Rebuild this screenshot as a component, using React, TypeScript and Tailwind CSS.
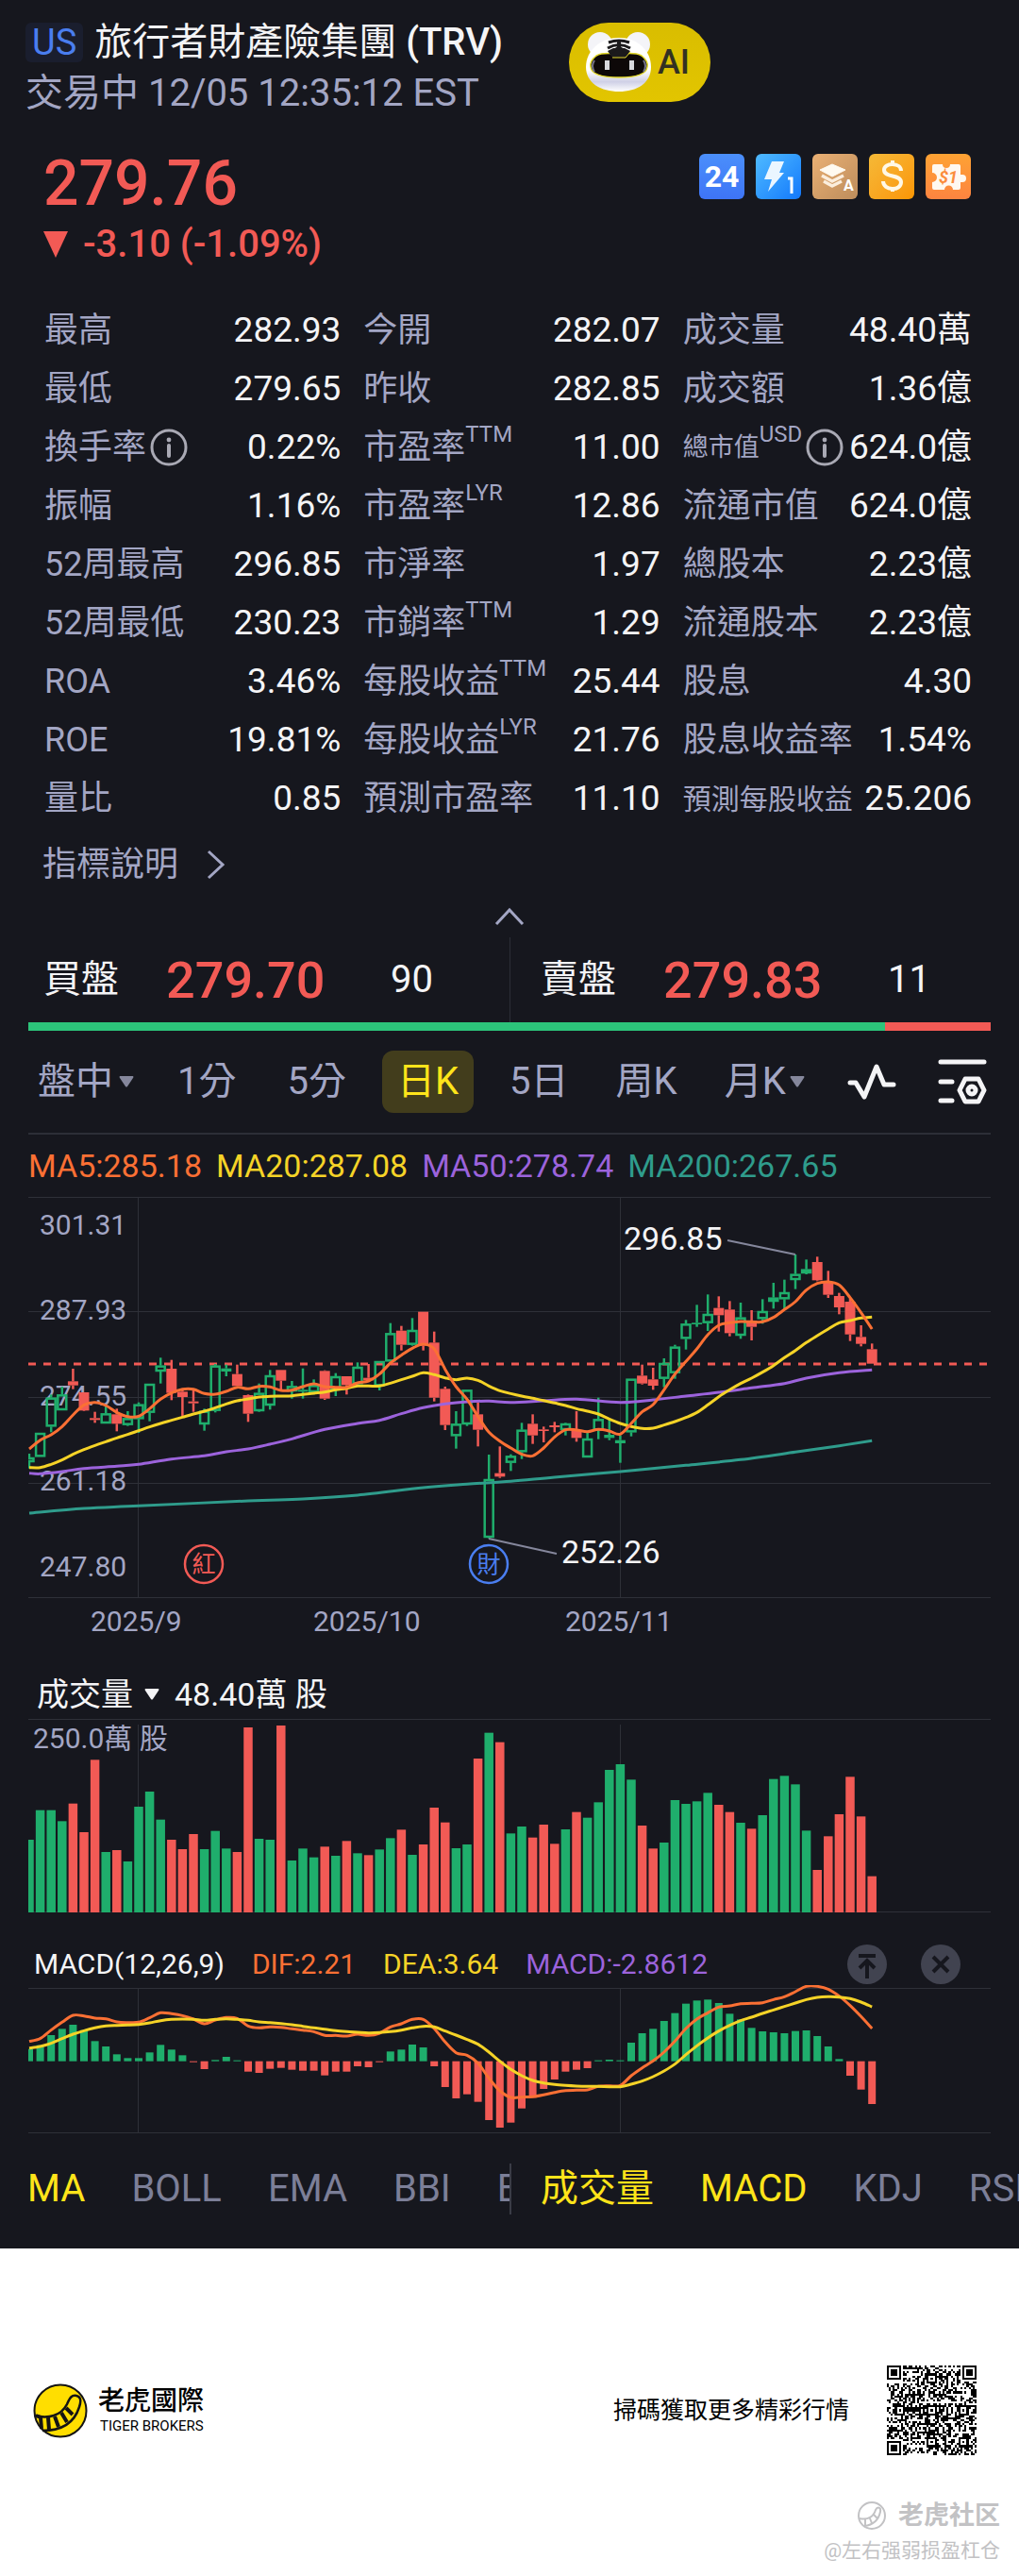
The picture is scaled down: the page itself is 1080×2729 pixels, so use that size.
import React from "react";

type Candle = [number, number, number, number, 0 | 1];

const GREEN = "#1fae6c";
const RED = "#f25a55";
const ORANGE = "#fb7034";
const YELLOW = "#f5d327";
const PURPLE = "#9c63dc";
const TEAL = "#2f9c8c";
const MUTED = "#a3a6c4";
const GRID = "#2e3038";

/* [high, body top, body bottom, low, rising] in thirds of a chart unit */
const candles: Candle[] = [
  [843, 855, 870, 890, 1], [777, 777, 853, 853, 1], [655, 665, 757, 775, 1], [630, 655, 705, 705, 1],
  [573, 613, 626, 638, 0], [648, 648, 706, 708, 0], [710, 730, 736, 745, 0], [690, 715, 747, 747, 1],
  [700, 718, 748, 772, 0], [708, 730, 752, 755, 1], [680, 686, 733, 777, 1], [621, 621, 713, 740, 1],
  [538, 563, 582, 620, 1], [545, 573, 650, 673, 0], [640, 646, 663, 725, 0], [642, 677, 683, 710, 0],
  [700, 707, 750, 770, 1], [558, 563, 707, 712, 1], [560, 572, 582, 597, 1], [560, 590, 628, 628, 0],
  [655, 657, 716, 742, 0], [620, 650, 708, 710, 1], [577, 594, 690, 703, 1], [577, 577, 611, 640, 0],
  [612, 628, 645, 668, 1], [572, 640, 646, 668, 1], [607, 625, 648, 655, 1], [578, 580, 668, 672, 0],
  [587, 597, 640, 660, 1], [597, 597, 625, 655, 0], [553, 567, 622, 625, 1], [558, 602, 610, 612, 0],
  [549, 549, 628, 642, 1], [428, 460, 550, 550, 1], [437, 452, 497, 515, 0], [412, 450, 497, 500, 1],
  [392, 392, 500, 515, 0], [455, 490, 665, 677, 0], [630, 637, 752, 768, 0], [708, 748, 787, 827, 1],
  [640, 640, 750, 755, 1], [680, 718, 767, 820, 0], [846, 924, 1110, 1112, 1], [820, 905, 916, 920, 0],
  [845, 850, 872, 898, 1], [745, 767, 838, 860, 1], [718, 748, 785, 812, 0], [757, 766, 771, 807, 0],
  [742, 753, 759, 775, 0], [745, 747, 768, 785, 1], [708, 768, 793, 805, 0], [770, 795, 855, 855, 1],
  [665, 733, 770, 797, 1], [735, 783, 793, 800, 1], [785, 800, 810, 872, 1], [605, 605, 775, 788, 1],
  [560, 595, 620, 623, 0], [570, 607, 627, 640, 0], [540, 555, 605, 632, 1], [497, 503, 587, 605, 1],
  [418, 430, 478, 512, 1], [370, 427, 432, 440, 1], [337, 399, 428, 453, 1], [343, 380, 403, 455, 0],
  [358, 385, 460, 470, 0], [363, 410, 468, 478, 1], [387, 420, 440, 483, 0], [352, 390, 415, 430, 1],
  [300, 347, 360, 382, 1], [290, 330, 352, 385, 1], [210, 272, 291, 320, 1], [226, 257, 270, 273, 1],
  [217, 234, 292, 295, 0], [262, 300, 338, 348, 0], [332, 342, 378, 400, 0], [348, 360, 464, 485, 0],
  [435, 472, 494, 502, 0], [493, 511, 557, 557, 0],
];

const ma5 = [828, 800, 783, 757, 720, 688, 680, 690, 712, 725, 724, 700, 670, 650, 638, 638, 652, 654, 645, 632, 637, 629, 631, 642, 641, 630, 621, 630, 632, 632, 618, 612, 590, 555, 530, 508, 495, 510, 575, 630, 670, 725, 775, 803, 825, 845, 850, 825, 790, 767, 768, 773, 766, 771, 781, 747, 710, 687, 640, 590, 550, 510, 465, 435, 427, 423, 424, 424, 410, 385, 360, 323, 302, 297, 307, 347, 395, 447];
const ma20 = [887, 887, 877, 863, 845, 830, 817, 805, 793, 782, 770, 758, 747, 737, 727, 717, 708, 697, 685, 675, 669, 663, 661, 660, 659, 655, 651, 647, 640, 635, 628, 628, 628, 619, 608, 597, 586, 592, 602, 608, 603, 610, 628, 643, 652, 660, 667, 674, 682, 690, 700, 708, 717, 733, 747, 757, 763, 762, 752, 741, 728, 712, 688, 662, 640, 620, 603, 584, 563, 538, 515, 490, 468, 447, 427, 420, 412, 409];
const ma50: [number, number][] = [[0, 905], [1, 907], [3, 900], [5, 890], [8, 883], [10, 877], [13, 860], [16, 850], [18, 837], [20, 828], [22, 813], [24, 796], [27, 766], [30, 747], [32, 737], [34, 716], [36, 697], [38, 685], [40, 678], [42, 676], [44, 680], [47, 675], [50, 670], [54, 680], [57, 672], [60, 660], [63, 648], [66, 634], [69, 620], [71, 603], [74, 586], [77, 577]];
const ma200: [number, number][] = [[0, 1032], [5, 1017], [10, 1009], [20, 993], [25, 987], [30, 975], [36, 951], [40, 940], [44, 931], [48, 918], [54, 900], [60, 880], [65, 862], [70, 838], [74, 818], [77, 802]];

/* Top edge of each volume bar; negative marks a falling day */
const volumes = [600, 506, 506, 541, -485, -576, -346, 639, -633, 669, 495, 447, 536, -600, -630, -582, 630, 572, 628, -639, -243, 597, 600, -237, 666, 628, 656, -622, 651, -604, 643, -649, 631, 595, -568, 648, -615, -498, -545, 627, 615, -342, 260, -290, 580, 558, -593, -552, -613, 567, -512, 530, 481, 378, 360, 409, -555, -628, 609, 474, 486, 478, 451, -489, -512, 546, -565, 522, 407, 397, 424, 571, -696, -589, -519, -400, -526, -716];

const macd = [395, 383, 351, 331, 318, 335, 370, 387, 412, 424, 424, 406, 382, 397, 415, 437, 459, 430, 420, 431, 467, 471, 458, 455, 461, 464, 464, 479, 467, 467, 450, 453, 437, 403, 397, 381, 390, 450, 516, 552, 539, 563, 621, 645, 629, 584, 550, 522, 492, 467, 461, 456, 431, 429, 431, 375, 345, 331, 306, 281, 251, 241, 238, 249, 283, 301, 328, 339, 342, 345, 338, 336, 354, 387, 427, 480, 524, 570];
const dif = [371, 362, 335, 310, 288, 290, 297, 299, 309, 311, 310, 296, 280, 283, 289, 300, 315, 303, 295, 298, 322, 328, 325, 326, 331, 335, 340, 352, 352, 354, 348, 352, 345, 325, 315, 301, 301, 330, 373, 407, 415, 440, 488, 528, 549, 548, 547, 541, 533, 527, 526, 525, 514, 512, 511, 480, 455, 433, 405, 370, 330, 300, 280, 262, 258, 251, 250, 248, 238, 229, 213, 196, 196, 205, 227, 257, 292, 330];
const dea = [392, 387, 377, 362, 348, 337, 328, 322, 320, 319, 317, 312, 305, 301, 300, 301, 304, 301, 299, 301, 304, 309, 311, 314, 318, 323, 328, 332, 337, 340, 342, 344, 343, 340, 335, 328, 323, 325, 338, 351, 365, 380, 405, 434, 460, 480, 495, 503, 508, 511, 513, 514, 514, 515, 515, 507, 497, 483, 465, 443, 413, 385, 360, 338, 320, 305, 294, 282, 271, 260, 249, 238, 231, 229, 230, 235, 246, 261];

const barX = (i: number) => 1 + 11.6 * i;
const indexed = (values: number[]) => values.map((v, i) => [i, v] as [number, number]);

/* Smooth curve through the points, with Catmull-Rom control points */
function curve(points: [number, number][], offset: number) {
  const p = points.map(([i, v]) => [barX(i), v / 3 - offset]);
  let d = `M${p[0][0]} ${p[0][1]}`;
  for (let i = 0; i < p.length - 1; i++) {
    const a = p[i - 1] || p[i];
    const b = p[i];
    const c = p[i + 1];
    const e = p[i + 2] || c;
    d += `C${b[0] + (c[0] - a[0]) / 6} ${b[1] + (c[1] - a[1]) / 6} ${c[0] - (e[0] - b[0]) / 6} ${c[1] - (e[1] - b[1]) / 6} ${c[0]} ${c[1]}`;
  }
  return d;
}

function PriceChart() {
  const y = (v: number) => v / 3 - 8;
  return (
    <svg viewBox="0 0 1020 476" className="block w-full" role="img" aria-label="日K">
      <g stroke={GRID} strokeWidth="1">
        {[1.5, 122.5, 213.5, 304.5, 425.5].map((v) => (
          <line key={v} x1="0" x2="1020" y1={v} y2={v} />
        ))}
        <line x1="116.5" x2="116.5" y1="1" y2="425" />
        <line x1="627.5" x2="627.5" y1="1" y2="425" />
      </g>
      <g fill={MUTED} fontSize="30">
        <text x="12" y="41">301.31</text>
        <text x="12" y="131">287.93</text>
        <text x="12" y="222">274.55</text>
        <text x="12" y="312">261.18</text>
        <text x="12" y="403">247.80</text>
        <text x="66" y="461">2025/9</text>
        <text x="302" y="461">2025/10</text>
        <text x="569" y="461">2025/11</text>
      </g>
      <line x1="0" x2="1017" y1="178" y2="178" stroke={RED} strokeWidth="3" strokeDasharray="8 8" />
      {candles.map(([h, t, b, l, up], i) => {
        const x = barX(i);
        const color = up ? GREEN : RED;
        return (
          <g key={i} stroke={color} strokeWidth="2.5">
            <line x1={x} x2={x} y1={y(h)} y2={y(t)} />
            <line x1={x} x2={x} y1={y(b)} y2={y(l)} />
            {up && b - t > 12 ? (
              <rect x={x - 4.5} y={y(t) + 1} width="9" height={(b - t) / 3 - 2} fill="none" />
            ) : (
              <rect x={x - 5.5} y={y(t)} width="11" height={(b - t) / 3} fill={color} stroke="none" />
            )}
          </g>
        );
      })}
      <g fill="none" strokeWidth="3">
        <path d={curve(ma200, 8)} stroke={TEAL} />
        <path d={curve(ma50, 8)} stroke={PURPLE} />
        <path d={curve(indexed(ma20), 8)} stroke={YELLOW} />
        <path d={curve(indexed(ma5), 8)} stroke={ORANGE} />
      </g>
      <g stroke="#85879c" strokeWidth="2">
        <line x1="741" y1="47" x2="813" y2="62" />
        <line x1="488" y1="363" x2="560" y2="379" />
      </g>
      <g fill="#f4f4f6" fontSize="34">
        <text x="631" y="57">296.85</text>
        <text x="565" y="389">252.26</text>
      </g>
      <g fontSize="25" textAnchor="middle" strokeWidth="2.5">
        <circle cx="186" cy="390" r="20" fill="none" stroke={RED} />
        <text x="186" y="399" fill={RED}>紅</text>
        <circle cx="488" cy="390" r="20" fill="none" stroke="#4a7ef0" />
        <text x="488" y="399" fill="#4a7ef0">財</text>
      </g>
    </svg>
  );
}

function VolumeChart() {
  return (
    <svg viewBox="0 0 1020 210" className="block w-full" role="img" aria-label="成交量">
      <g stroke={GRID} strokeWidth="1">
        <line x1="0" x2="1020" y1="2.5" y2="2.5" />
        <line x1="0" x2="1020" y1="206.5" y2="206.5" />
        <line x1="116.5" x2="116.5" y1="8" y2="206" />
        <line x1="627.5" x2="627.5" y1="8" y2="206" />
      </g>
      <text x="5" y="33" fontSize="30" fill={MUTED}>250.0萬 股</text>
      {volumes.map((v, i) => {
        const top = Math.abs(v) / 3 - 70;
        return <rect key={i} x={barX(i) - 4.75} y={top} width="9.5" height={207 - top} fill={v < 0 ? RED : GREEN} />;
      })}
    </svg>
  );
}

function MacdChart() {
  const zero = 434 / 3 - 64;
  return (
    <svg viewBox="0 0 1020 158" className="block w-full overflow-hidden" role="img" aria-label="MACD">
      <g stroke={GRID} strokeWidth="1">
        <line x1="0" x2="1020" y1="3.5" y2="3.5" />
        <line x1="0" x2="1020" y1="156.5" y2="156.5" />
        <line x1="116.5" x2="116.5" y1="3" y2="156" />
        <line x1="627.5" x2="627.5" y1="3" y2="156" />
      </g>
      {macd.map((v, i) => {
        const edge = v / 3 - 64;
        return (
          <rect key={i} x={barX(i) - 4} y={Math.min(edge, zero)} width="8" height={Math.abs(edge - zero)} fill={edge > zero ? RED : GREEN} />
        );
      })}
      <g fill="none" strokeWidth="3">
        <path d={curve(indexed(dif), 64)} stroke={ORANGE} />
        <path d={curve(indexed(dea), 64)} stroke={YELLOW} />
      </g>
    </svg>
  );
}

function Robot() {
  return (
    <svg viewBox="0 0 72 66" className="h-[66px] w-[72px]" aria-hidden="true">
      <defs>
        <linearGradient id="robotHead" x1="0" y1="0" x2="0" y2="1">
          <stop offset="0.6" stopColor="#ffffff" />
          <stop offset="0.82" stopColor="#cfd0e6" />
          <stop offset="1" stopColor="#ffffff" />
        </linearGradient>
      </defs>
      <circle cx="17" cy="14" r="13" fill="#f4f4f8" />
      <circle cx="57" cy="14" r="13" fill="#f4f4f8" />
      <path d="M37 7C56 7 71 20 71 38C71 55 56 64 37 64C18 64 2 55 2 38C2 20 18 7 37 7Z" fill="url(#robotHead)" />
      <path d="M13 26C20 22 28 24 37 24S54 22 61 26C66 30 68 34 67 38C66 46 53 49 37 49S8 46 7 38C6 34 8 30 13 26Z" fill="#0d0808" stroke="#e3d92c" strokeWidth="1.5" />
      <path d="M25 21L30 28H44L49 21L43 18H31Z" fill="#1b1a1c" />
      <path d="M30 28H44L49 22" fill="none" stroke="#e3d92c" strokeWidth="1" />
      <path d="M26 12Q37 8 48 12M25 18Q37 11 49 18M28 23L37 17L46 23" fill="none" stroke="#1b1a1c" strokeWidth="3" />
      <path d="M37 10V24" stroke="#1b1a1c" strokeWidth="4" />
      <path d="M11 31Q7 37 11 43M63 31Q67 37 63 43" fill="none" stroke="#77768a" strokeWidth="2" />
      <rect x="22" y="31" width="5" height="10" fill="#d8d8dc" />
      <rect x="48" y="31" width="5" height="10" fill="#d8d8dc" />
    </svg>
  );
}

function FeatureTags() {
  return (
    <div className="flex gap-3 pt-[5px]">
      <span className="flex size-12 items-center justify-center rounded-md bg-gradient-to-b from-[#4b8ffb] to-[#3e74f6] text-[32px] font-bold text-white">24</span>
      <span className="flex size-12 rounded-md bg-gradient-to-br from-[#4fbaff] to-[#1478fb]">
        <svg viewBox="0 0 48 48" className="size-12" aria-hidden="true">
          <path d="M17 8H30L25 20H30L13 40L17 27H9Z" fill="#eaf6ff" />
          <path d="M34 26H38V42" fill="none" stroke="#fff" strokeWidth="3" />
        </svg>
      </span>
      <span className="flex size-12 rounded-md bg-gradient-to-br from-[#eab074] to-[#bd8d5c]">
        <svg viewBox="0 0 48 48" className="size-12" aria-hidden="true">
          <path d="M8 17L21 11L35 17L21 24Z" fill="#fffaf0" stroke="#fffaf0" strokeLinejoin="round" />
          <path d="M10 23L21 29L33 23M12 29L21 34L31 29" fill="none" stroke="#fbeedd" strokeWidth="3.5" strokeLinejoin="round" />
          <text x="33" y="39" fontSize="16" fontWeight="700" fill="#fff">A</text>
        </svg>
      </span>
      <span className="flex size-12 rounded-md bg-gradient-to-br from-[#f5b936] to-[#fb9600]">
        <svg viewBox="0 0 48 48" className="size-12" aria-hidden="true">
          <path d="M34 18C34 9 16 9 16 17C16 26 34 21 34 30C34 40 15 39 15 29M25 7V12M25 35V40" fill="none" stroke="#fff8e6" strokeWidth="4" />
        </svg>
      </span>
      <span className="flex size-12 rounded-md bg-gradient-to-b from-[#fea233] to-[#fd8440]">
        <svg viewBox="0 0 48 48" className="size-12" aria-hidden="true">
          <path d="M9 11H18A4 4 0 0 0 26 11H35Q37 11 37 13V22H39A4 4 0 1 1 39 30H37V36Q37 38 35 38H29A4 4 0 0 0 20 38H9Q7 38 7 36V30A5 5 0 0 0 7 20V13Q7 11 9 11Z" fill="#fff8f0" />
          <text x="14" y="31" fontSize="18" fontStyle="italic" fontWeight="700" fill="#fb8c3c">$1</text>
        </svg>
      </span>
    </div>
  );
}

function InfoIcon() {
  return (
    <svg viewBox="0 0 40 40" className="size-10 shrink-0" aria-hidden="true">
      <circle cx="20" cy="20" r="18" fill="none" stroke="#a9a9b4" strokeWidth="3" />
      <path d="M20 18V29" stroke="#a9a9b4" strokeWidth="4" strokeLinecap="round" />
      <circle cx="20" cy="12" r="2.4" fill="#a9a9b4" />
    </svg>
  );
}

function Caret({ className }: { className: string }) {
  return (
    <svg viewBox="0 0 16 12" className={className} aria-hidden="true">
      <path d="M1 0H15Q16 1 15 2L9 11Q8 12 7 11L1 2Q0 1 1 0Z" fill="currentColor" />
    </svg>
  );
}

type Stat = { label: string; value: string; sup?: string; info?: boolean; size?: "s" | "m" };

const stats: Stat[] = [
  { label: "最高", value: "282.93" }, { label: "今開", value: "282.07" }, { label: "成交量", value: "48.40萬" },
  { label: "最低", value: "279.65" }, { label: "昨收", value: "282.85" }, { label: "成交額", value: "1.36億" },
  { label: "換手率", value: "0.22%", info: true }, { label: "市盈率", value: "11.00", sup: "TTM" }, { label: "總市值", value: "624.0億", sup: "USD", info: true, size: "s" },
  { label: "振幅", value: "1.16%" }, { label: "市盈率", value: "12.86", sup: "LYR" }, { label: "流通市值", value: "624.0億" },
  { label: "52周最高", value: "296.85" }, { label: "市淨率", value: "1.97" }, { label: "總股本", value: "2.23億" },
  { label: "52周最低", value: "230.23" }, { label: "市銷率", value: "1.29", sup: "TTM" }, { label: "流通股本", value: "2.23億" },
  { label: "ROA", value: "3.46%" }, { label: "每股收益", value: "25.44", sup: "TTM" }, { label: "股息", value: "4.30" },
  { label: "ROE", value: "19.81%" }, { label: "每股收益", value: "21.76", sup: "LYR" }, { label: "股息收益率", value: "1.54%" },
  { label: "量比", value: "0.85" }, { label: "預測市盈率", value: "11.10" }, { label: "預測每股收益", value: "25.206", size: "m" },
];

const labelSize = { s: "text-[27px]", m: "text-[30px]" };

function Stats() {
  return (
    <dl className="mt-[33px] grid grid-cols-[314fr_314fr_306fr] gap-x-6 pr-[50px] pl-[47px]">
      {stats.map((s, i) => (
        <div key={i} className="flex h-[62px] items-center justify-between whitespace-nowrap">
          <dt className={`flex items-center text-[#a3a6c4] ${s.size ? labelSize[s.size] : "text-[36px]"}`}>
            {s.label}
            {s.sup && <sup className="top-0 -mt-7 text-[24px] leading-6">{s.sup}</sup>}
            {s.info && <span className="ml-1"><InfoIcon /></span>}
          </dt>
          <dd className="text-[37px] text-[#f4f4f6]">{s.value}</dd>
        </div>
      ))}
    </dl>
  );
}

function Quote({ label, price, size }: { label: string; price: string; size: string }) {
  return (
    <div className="flex flex-1 items-center text-[40px] text-[#f4f4f6]">
      <span className="w-[130px]">{label}</span>
      <span className="w-[238px] text-[54px] font-medium text-[#f25a55]">{price}</span>
      <span>{size}</span>
    </div>
  );
}

function Periods() {
  return (
    <nav className="flex h-[110px] items-center gap-[38px] border-b-2 border-[#2c2e37] pr-1 pl-[10px] text-[40px] whitespace-nowrap text-[#a3a6c4]">
      <button className="flex items-center gap-[6px]">盤中<Caret className="h-3 w-4 text-[#85879c]" /></button>
      <button className="px-2">1分</button>
      <button className="pl-2">5分</button>
      <button className="h-[66px] rounded-xl bg-[#423d1c] px-4 text-[#ffe41a]">日K</button>
      <button>5日</button>
      <button className="px-3">周K</button>
      <button className="flex items-center gap-1">月K<Caret className="h-3 w-4 text-[#85879c]" /></button>
      <div className="ml-auto flex items-center gap-11">
        <button aria-label="走勢">
          <svg viewBox="0 0 52 40" className="block h-10 w-[52px]" fill="none" stroke="#f4f4f6" strokeWidth="5" strokeLinecap="round" strokeLinejoin="round">
            <path d="M3 21H9L18 36L31 4L39 23H49" />
          </svg>
        </button>
        <button aria-label="圖表設定">
          <svg viewBox="0 0 52 50" className="block h-[50px] w-[52px]" fill="none" stroke="#f4f4f6" strokeWidth="5" strokeLinecap="round" strokeLinejoin="round">
            <path d="M3 4H49M3 25H15M3 45H15M29 22H43L49 34L43 46H29L23 34Z" />
            <circle cx="36" cy="34" r="4" />
          </svg>
        </button>
      </div>
    </nav>
  );
}

function BrandMark({ className }: { className: string }) {
  return (
    <svg viewBox="0 0 58 58" className={className} aria-hidden="true">
      <circle cx="29" cy="29" r="27.5" fill="#ffde00" stroke="#141414" strokeWidth="2" />
      <path d="M2 34C16 38 30 34 36 22C39 15 41 12 46 13C51 14 51 19 49 25C44 41 31 50 10 50" fill="none" stroke="#141414" strokeWidth="2.5" />
      <path d="M3 34L8 36L9 48M16 36L17 49M23 35L27 46M30 31L36 41M35 26L42 33" fill="none" stroke="#141414" strokeWidth="4" />
    </svg>
  );
}

const QR_SIZE = 45;

function qrModules() {
  let seed = 20251205;
  const near = (x: number, y: number, cx: number, cy: number) => Math.max(Math.abs(x - cx), Math.abs(y - cy));
  let d = "";
  for (let y = 0; y < QR_SIZE; y++) {
    for (let x = 0; x < QR_SIZE; x++) {
      seed = (seed * 1103515245 + 12345) % 2147483648;
      let on = (seed >> 12) % 2 === 0;
      for (const [cx, cy] of [[6, 22], [22, 6], [22, 22], [38, 22], [22, 38], [38, 38]]) {
        const r = near(x, y, cx, cy);
        if (r <= 2) on = r !== 1;
      }
      for (const [cx, cy] of [[3, 3], [41, 3], [3, 41]]) {
        const r = near(x, y, cx, cy);
        if (r <= 4) on = r !== 2 && r !== 4;
      }
      if (on) d += `M${x} ${y}h1v1h-1z`;
    }
  }
  return d;
}

export default function App() {
  return (
    <div className="min-h-screen overflow-hidden bg-white font-['Roboto','Noto_Sans_CJK_TC',sans-serif]">
      <main className="bg-[#16171e] pb-9">
        <header className="flex items-start gap-[70px] pt-[18px] pl-[27px] whitespace-nowrap">
          <div>
            <h1 className="flex h-[54px] items-center gap-3 text-[40px] text-[#f4f4f6]">
              <span className="flex h-[42px] items-center rounded-md bg-[#1a1e2e] px-[7px] text-[38px] text-[#4a7ef0]">US</span>
              <span>旅行者財產險集團 <span className="font-medium">(TRV)</span></span>
            </h1>
            <p className="text-[40px] leading-[54px] text-[#a3a6c4]">交易中 12/05 12:35:12 EST</p>
          </div>
          <button className="mt-[6px] flex h-[84px] w-[150px] items-center gap-[6px] rounded-full bg-gradient-to-b from-[#d9bd00] to-[#e2c500] pl-4 text-[36px] font-medium text-[#333122]">
            <Robot />AI
          </button>
        </header>

        <section className="mt-8 flex items-start justify-between pr-[51px] pl-[46px] text-[#f25a55]">
          <div>
            <p className="text-[66px] leading-[74px] font-medium">279.76</p>
            <p className="flex items-center gap-4 text-[40px] leading-[54px] font-medium">
              <svg viewBox="0 0 26 28" className="h-7 w-[26px]" aria-hidden="true"><path d="M0 0H26L13 28Z" fill="currentColor" /></svg>
              -3.10 (-1.09%)
            </p>
          </div>
          <FeatureTags />
        </section>

        <Stats />

        <a href="#indicators" className="mt-2 ml-[45px] flex h-[62px] w-fit items-center gap-[30px] text-[36px] text-[#a3a6c4]">
          指標說明
          <svg viewBox="0 0 20 32" className="h-8 w-5" fill="none" stroke="currentColor" strokeWidth="3" aria-hidden="true"><path d="M2 2L17 16L2 30" /></svg>
        </a>
        <button aria-label="收起" className="mx-auto mt-[13px] block">
          <svg viewBox="0 0 32 22" className="block h-[22px] w-8" fill="none" stroke="#a3a6c4" strokeWidth="3" aria-hidden="true"><path d="M2 19L16 4L30 19" /></svg>
        </button>

        <div className="px-[30px]">
          <section className="mt-[11px] grid h-[90px] grid-cols-2">
            <div className="flex pl-4"><Quote label="買盤" price="279.70" size="90" /></div>
            <div className="flex border-l border-[#2c2e37] pl-8"><Quote label="賣盤" price="279.83" size="11" /></div>
          </section>
          <div className="flex h-[9px] bg-[#f25a55]"><div className="w-[89%] bg-[#2cc47a]" /></div>

          <Periods />

          <p className="mt-[9px] flex gap-[15px] text-[34px] leading-[48px] whitespace-nowrap">
            <span className="text-[#fb7034]">MA5:285.18</span>
            <span className="text-[#f5d327]">MA20:287.08</span>
            <span className="text-[#9c63dc]">MA50:278.74</span>
            <span className="text-[#2f9c8c]">MA200:267.65</span>
          </p>
          <div className="mt-2"><PriceChart /></div>

          <div className="mt-7 flex items-center pl-[9px] text-[34px] leading-[48px] text-[#f4f4f6]">
            <button className="flex items-center gap-3">成交量<Caret className="h-3 w-4" /></button>
            <span className="ml-4">48.40萬 股</span>
          </div>
          <VolumeChart />

          <div className="mt-[29px] flex h-[45px] items-center gap-[29px] pr-8 pl-[6px] text-[30px] whitespace-nowrap">
            <span className="text-[#f4f4f6]">MACD(12,26,9)</span>
            <span className="text-[#fb7034]">DIF:2.21</span>
            <span className="text-[#f5d327]">DEA:3.64</span>
            <span className="text-[#9c63dc]">MACD:-2.8612</span>
            <div className="ml-auto flex gap-9">
              <button aria-label="移到頂部" className="size-[42px] rounded-full bg-[#414350]">
                <svg viewBox="0 0 42 42" fill="none" stroke="#16171e" strokeWidth="4"><path d="M12 12H30M21 36V18M13 25L21 17L29 25" /></svg>
              </button>
              <button aria-label="關閉" className="size-[42px] rounded-full bg-[#414350]">
                <svg viewBox="0 0 42 42" fill="none" stroke="#16171e" strokeWidth="4"><path d="M13 13L29 29M29 13L13 29" /></svg>
              </button>
            </div>
          </div>
          <MacdChart />
        </div>

        <nav className="mt-[31px] flex h-[54px] items-center text-[40px] whitespace-nowrap text-[#7c7f98]">
          <div className="flex w-1/2 gap-[49px] overflow-hidden pl-[29px]">
            <button className="text-[#ffe41a]">MA</button>
            <button>BOLL</button>
            <button>EMA</button>
            <button>BBI</button>
            <button>ENE</button>
          </div>
          <div className="flex h-[54px] w-1/2 items-center gap-[49px] overflow-hidden border-l-2 border-[#3a3c46] pl-[31px]">
            <button className="text-[#ffe41a]">成交量</button>
            <button className="text-[#ffe41a]">MACD</button>
            <button>KDJ</button>
            <button>RSI</button>
          </div>
        </nav>
      </main>

      <footer className="pt-[124px] text-black">
        <div className="flex items-center pr-[45px] pl-[35px]">
          <BrandMark className="size-[58px]" />
          <div className="ml-[11px]">
            <p className="text-[28px] leading-8 font-medium">老虎國際</p>
            <p className="pl-[2px] text-[15px] leading-5">TIGER BROKERS</p>
          </div>
          <p className="ml-auto text-[25px]">掃碼獲取更多精彩行情</p>
          <svg viewBox="0 0 45 45" className="ml-10 size-[95px]" shapeRendering="crispEdges" role="img" aria-label="QR code">
            <path d={qrModules()} />
          </svg>
        </div>
        <div className="mt-[44px] flex flex-col items-end pr-5 font-['Roboto','Noto_Sans_CJK_SC',sans-serif] text-[#c2c2c4]">
          <p className="flex items-center gap-3 text-[27px] leading-10 font-bold">
            <svg viewBox="0 0 32 32" className="size-8" fill="none" stroke="#c2c2c4" strokeWidth="2" aria-hidden="true">
              <circle cx="16" cy="16" r="14" />
              <path d="M3 19C12 21 18 17 20 10C22 6 26 7 25 12C23 21 17 26 8 27M9 20V26M14 19L16 24M18 15L22 19" />
            </svg>
            老虎社区
          </p>
          <p className="text-[21px] leading-[34px]">@左右强弱损盈杠仓</p>
        </div>
      </footer>
    </div>
  );
}
